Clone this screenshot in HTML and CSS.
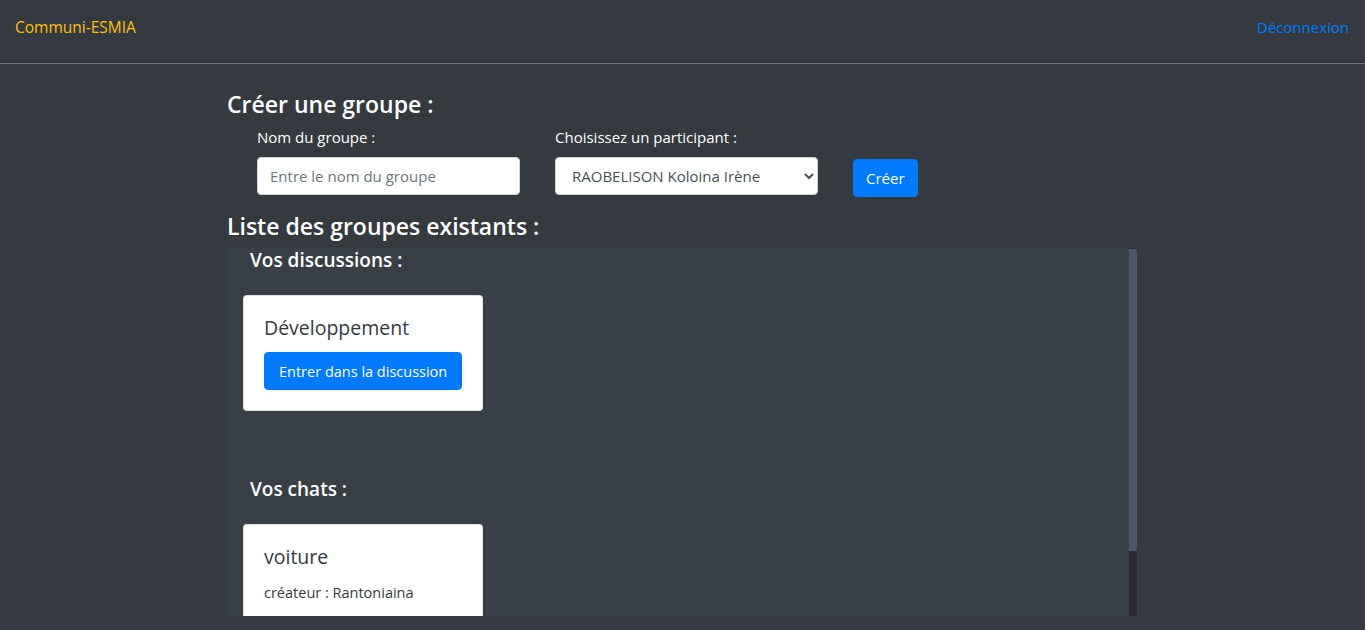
FILE: index.html
```html
<!DOCTYPE html>
<html lang="fr">
<head>
<meta charset="utf-8">
<title>Communi-ESMIA</title>
<link rel="stylesheet" href="styles.css">
</head>
<body>
<nav class="navbar">
  <a class="brand" href="#">Communi-ESMIA</a>
  <a class="logout" href="#">Déconnexion</a>
</nav>
<main class="container">
  <h2 class="section-title">Créer une groupe :</h2>
  <form class="create-form">
    <div class="field">
      <label class="field-label" for="nom">Nom du groupe :</label>
      <input class="control" id="nom" type="text" placeholder="Entre le nom du groupe">
    </div>
    <div class="field">
      <label class="field-label" for="part">Choisissez un participant :</label>
      <select class="control select" id="part">
        <option>RAOBELISON Koloina Irène</option>
      </select>
    </div>
    <div class="field field-btn">
      <button class="btn" type="button">Créer</button>
    </div>
  </form>
  <h2 class="section-title list-title">Liste des groupes existants :</h2>
  <div class="scroll-box">
    <div class="scroll-content">
      <h3 class="sub-title">Vos discussions :</h3>
      <div class="card">
        <h4 class="card-title">Développement</h4>
        <button class="btn" type="button">Entrer dans la discussion</button>
      </div>
      <h3 class="sub-title chats-title">Vos chats :</h3>
      <div class="card">
        <h4 class="card-title">voiture</h4>
        <p class="card-text">créateur : Rantoniaina</p>
      </div>
    </div>
    <div class="scrollbar"><div class="scrollbar-thumb"></div></div>
  </div>
</main>
</body>
</html>
```
FILE: styles.css
```css
* { box-sizing: border-box; }
html, body { margin: 0; padding: 0; }
body {
  background: #343a40;
  color: #fff;
  font-family: "Open Sans", "Noto Sans", sans-serif;
  font-size: 15px;
  height: 630px;
  overflow: hidden;
}
.navbar {
  height: 64px;
  border-bottom: 1px solid #6f737a;
  display: flex;
  justify-content: space-between;
  align-items: flex-start;
  padding: 7px 16px 0 15px;
}
.navbar a {
  text-decoration: none;
  line-height: 40px;
}
.brand { color: #ffc107; font-size: 15.5px; }
.logout { color: #007bff; font-size: 15px; }
.container {
  width: 910px;
  margin-left: 227px;
}
.section-title {
  font-size: 23px;
  font-weight: 600;
  line-height: 29px;
  margin: 26px 0 0;
}
.create-form {
  display: flex;
  align-items: flex-start;
  padding-left: 30px;
  gap: 35px;
  margin-top: 6px;
}
.field { display: flex; flex-direction: column; }
.field-label {
  line-height: 24px;
  font-size: 15px;
  margin-bottom: 8px;
}
.control {
  width: 263px;
  height: 38px;
  border: 1px solid #ced4da;
  border-radius: 4px;
  background: #fff;
  padding: 6px 12px;
  font-family: inherit;
  font-size: 15px;
  color: #495057;
}
.control::placeholder { color: #6c757d; }
.field-btn { padding-top: 34px; }
.btn {
  background: #007bff;
  color: #fff;
  border: 1px solid #007bff;
  border-radius: 4px;
  height: 38px;
  padding: 0 12px;
  font-family: inherit;
  font-size: 15px;
  white-space: nowrap;
  cursor: pointer;
}
.card .btn { font-size: 14.5px; padding: 0 14px; }
.list-title { margin-top: 15px; }
.scroll-box {
  margin-top: 7px;
  height: 368px;
  background: #393f47;
  display: flex;
}
.scroll-content {
  flex: 1;
  overflow: hidden;
  padding: 0 0 20px 16px;
}
.scrollbar {
  width: 8px;
  background: #2a2a30;
  display: flex;
  flex-direction: column;
  padding-top: 1px;
}
.scrollbar-thumb {
  height: 302px;
  background: #4e5569;
}
.sub-title {
  font-size: 19px;
  font-weight: 600;
  line-height: 24px;
  margin: 0 0 23px 7px;
}
.chats-title { margin-top: 66px; }
.card {
  width: 240px;
  background: #fff;
  border: 1px solid rgba(0,0,0,.125);
  border-radius: 4px;
  padding: 20px;
  color: #343a40;
}
.card-title {
  font-size: 19.5px;
  font-weight: 500;
  line-height: 24px;
  margin: 0 0 12px;
}
.card-text {
  margin: 0 0 12px;
  line-height: 24px;
  font-size: 14.5px;
}
```
